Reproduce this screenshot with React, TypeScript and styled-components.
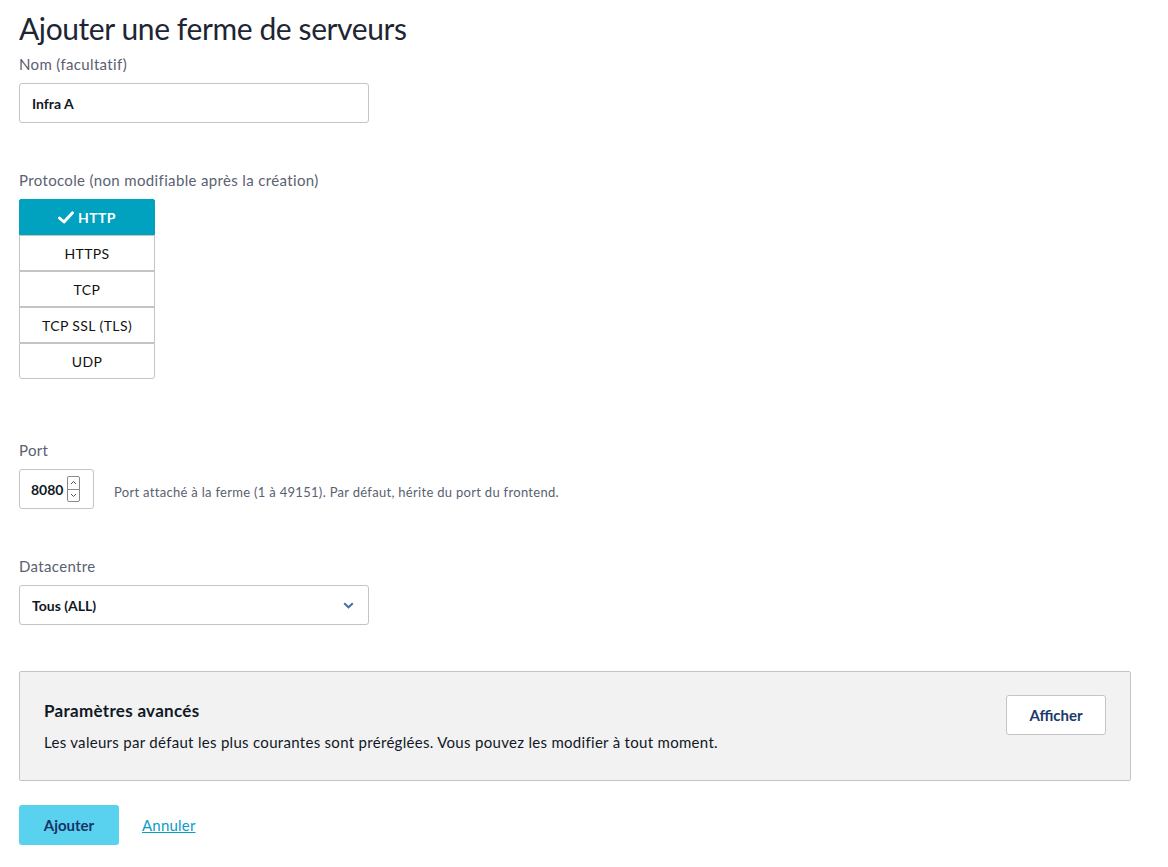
import React from "react";
import styled, { createGlobalStyle } from "styled-components";

const Global = createGlobalStyle`
  html, body { margin: 0; padding: 0; background: #fff; }
  body { font-family: Lato, "Noto Sans", sans-serif; color: #4d5360; }
  * { box-sizing: border-box; }
`;

const Page = styled.div`
  padding: 8px 37px 0 19px;
  display: flex;
  flex-direction: column;
`;

const Title = styled.h1`
  margin: 0;
  font-size: 30px;
  font-weight: 400;
  color: #1e2533;
  line-height: 40px;
  letter-spacing: -0.4px;
`;

const Field = styled.div<{ $mt: number }>`
  margin-top: ${(p) => p.$mt}px;
  display: flex;
  flex-direction: column;
`;

const Label = styled.label`
  font-size: 15px;
  color: #5a6171;
  line-height: 20px;
  margin-bottom: 9px;
  letter-spacing: 0.35px;
`;

const TextBox = styled.div<{ $w: number }>`
  width: ${(p) => p.$w}px;
  height: 40px;
  border: 1px solid #c4c4c4;
  border-radius: 3px;
  display: flex;
  align-items: center;
  padding: 0 12px;
  font-size: 14px;
  font-weight: 700;
  color: #111826;
  background: #fff;
`;

const ProtoList = styled.div`
  display: flex;
  flex-direction: column;
  width: 136px;
`;

const ProtoBtn = styled.div<{ $active?: boolean }>`
  height: 36px;
  display: flex;
  align-items: center;
  justify-content: center;
  gap: 4px;
  font-size: 14px;
  font-weight: ${(p) => (p.$active ? 700 : 400)};
  color: ${(p) => (p.$active ? "#fff" : "#111")};
  background: ${(p) => (p.$active ? "#00a2bf" : "#fff")};
  border: 1px solid ${(p) => (p.$active ? "#00a2bf" : "#c4c4c4")};
  border-radius: ${(p) => (p.$active ? "2px 2px 0 0" : "0")};
  letter-spacing: 0.4px;
  &:last-child { border-radius: 0 0 3px 3px; }
`;

const PortRow = styled.div`
  display: flex;
  align-items: center;
  gap: 20px;
`;

const PortBox = styled.div`
  width: 75px;
  height: 40px;
  border: 1px solid #c4c4c4;
  border-radius: 3px;
  display: flex;
  align-items: center;
  padding: 0 0 0 11px;
  gap: 4px;
  font-size: 14px;
  font-weight: 700;
  color: #111826;
`;

const Spinner = styled.div`
  display: flex;
  flex-direction: column;
  width: 13px;
  height: 26px;
  border: 1px solid #8a8a8a;
  border-radius: 2px;
  overflow: hidden;
`;

const SpinHalf = styled.div<{ $top?: boolean }>`
  flex: 1;
  display: flex;
  align-items: center;
  justify-content: center;
  border-top: ${(p) => (p.$top ? "none" : "1px solid #8a8a8a")};
`;

const Help = styled.span`
  font-size: 13px;
  color: #5a6171;
  margin-top: 6px;
  letter-spacing: 0.3px;
`;

const Select = styled(TextBox)`
  justify-content: space-between;
  padding: 0 14px 0 12px;
`;

const Advanced = styled.div`
  margin-top: 46px;
  height: 110px;
  background: #f2f2f2;
  border: 1px solid #c4c4c4;
  border-radius: 2px;
  display: flex;
  align-items: center;
  justify-content: space-between;
  padding: 0 24px 8px 24px;
`;

const AdvText = styled.div`
  display: flex;
  flex-direction: column;
  gap: 12px;
  padding-top: 6px;
`;

const AdvTitle = styled.div`
  font-size: 17px;
  font-weight: 700;
  color: #111826;
  letter-spacing: 0.3px;
`;

const AdvDesc = styled.div`
  font-size: 15px;
  color: #111826;
  letter-spacing: 0.3px;
`;

const OutlineBtn = styled.button`
  width: 100px;
  height: 40px;
  background: #fff;
  border: 1px solid #c4c4c4;
  border-radius: 3px;
  font-family: inherit;
  font-size: 15px;
  font-weight: 700;
  color: #1a3a6b;
  margin-top: -14px;
`;

const Actions = styled.div`
  margin-top: 24px;
  display: flex;
  align-items: center;
  gap: 23px;
`;

const PrimaryBtn = styled.button`
  width: 100px;
  height: 40px;
  background: #59d2ef;
  border: none;
  border-radius: 3px;
  font-family: inherit;
  font-size: 15px;
  font-weight: 700;
  color: #1a3366;
`;

const Link = styled.a`
  font-size: 15px;
  color: #0a9cc4;
  text-decoration: underline;
  letter-spacing: 0.2px;
`;

const protocols = ["HTTP", "HTTPS", "TCP", "TCP SSL (TLS)", "UDP"];

export default function App() {
  return (
    <>
      <Global />
      <Page>
        <Title>Ajouter une ferme de serveurs</Title>
        <Field $mt={6}>
          <Label>Nom (facultatif)</Label>
          <TextBox $w={350}>Infra A</TextBox>
        </Field>
        <Field $mt={47}>
          <Label>Protocole (non modifiable après la création)</Label>
          <ProtoList>
            {protocols.map((p, i) => (
              <ProtoBtn key={p} $active={i === 0}>
                {i === 0 && (
                  <svg width="16" height="13" viewBox="0 0 16 13">
                    <path d="M1.5 7 L6 11 L14.5 1.8" stroke="#fff" strokeWidth="3" fill="none" strokeLinecap="round" strokeLinejoin="round" />
                  </svg>
                )}
                {p}
              </ProtoBtn>
            ))}
          </ProtoList>
        </Field>
        <Field $mt={61}>
          <Label>Port</Label>
          <PortRow>
            <PortBox>
              8080
              <Spinner>
                <SpinHalf $top>
                  <svg width="7" height="5" viewBox="0 0 7 5"><path d="M1 4 L3.5 1.5 L6 4" stroke="#555" fill="none" /></svg>
                </SpinHalf>
                <SpinHalf>
                  <svg width="7" height="5" viewBox="0 0 7 5"><path d="M1 1 L3.5 3.5 L6 1" stroke="#555" fill="none" /></svg>
                </SpinHalf>
              </Spinner>
            </PortBox>
            <Help>Port attaché à la ferme (1 à 49151). Par défaut, hérite du port du frontend.</Help>
          </PortRow>
        </Field>
        <Field $mt={47}>
          <Label>Datacentre</Label>
          <Select $w={350}>
            Tous (ALL)
            <svg width="11" height="7" viewBox="0 0 11 7">
              <path d="M1.2 1.2 L5.5 5.3 L9.8 1.2" stroke="#4a6fa5" strokeWidth="2" fill="none" />
            </svg>
          </Select>
        </Field>
        <Advanced>
          <AdvText>
            <AdvTitle>Paramètres avancés</AdvTitle>
            <AdvDesc>Les valeurs par défaut les plus courantes sont préréglées. Vous pouvez les modifier à tout moment.</AdvDesc>
          </AdvText>
          <OutlineBtn>Afficher</OutlineBtn>
        </Advanced>
        <Actions>
          <PrimaryBtn>Ajouter</PrimaryBtn>
          <Link href="#">Annuler</Link>
        </Actions>
      </Page>
    </>
  );
}
